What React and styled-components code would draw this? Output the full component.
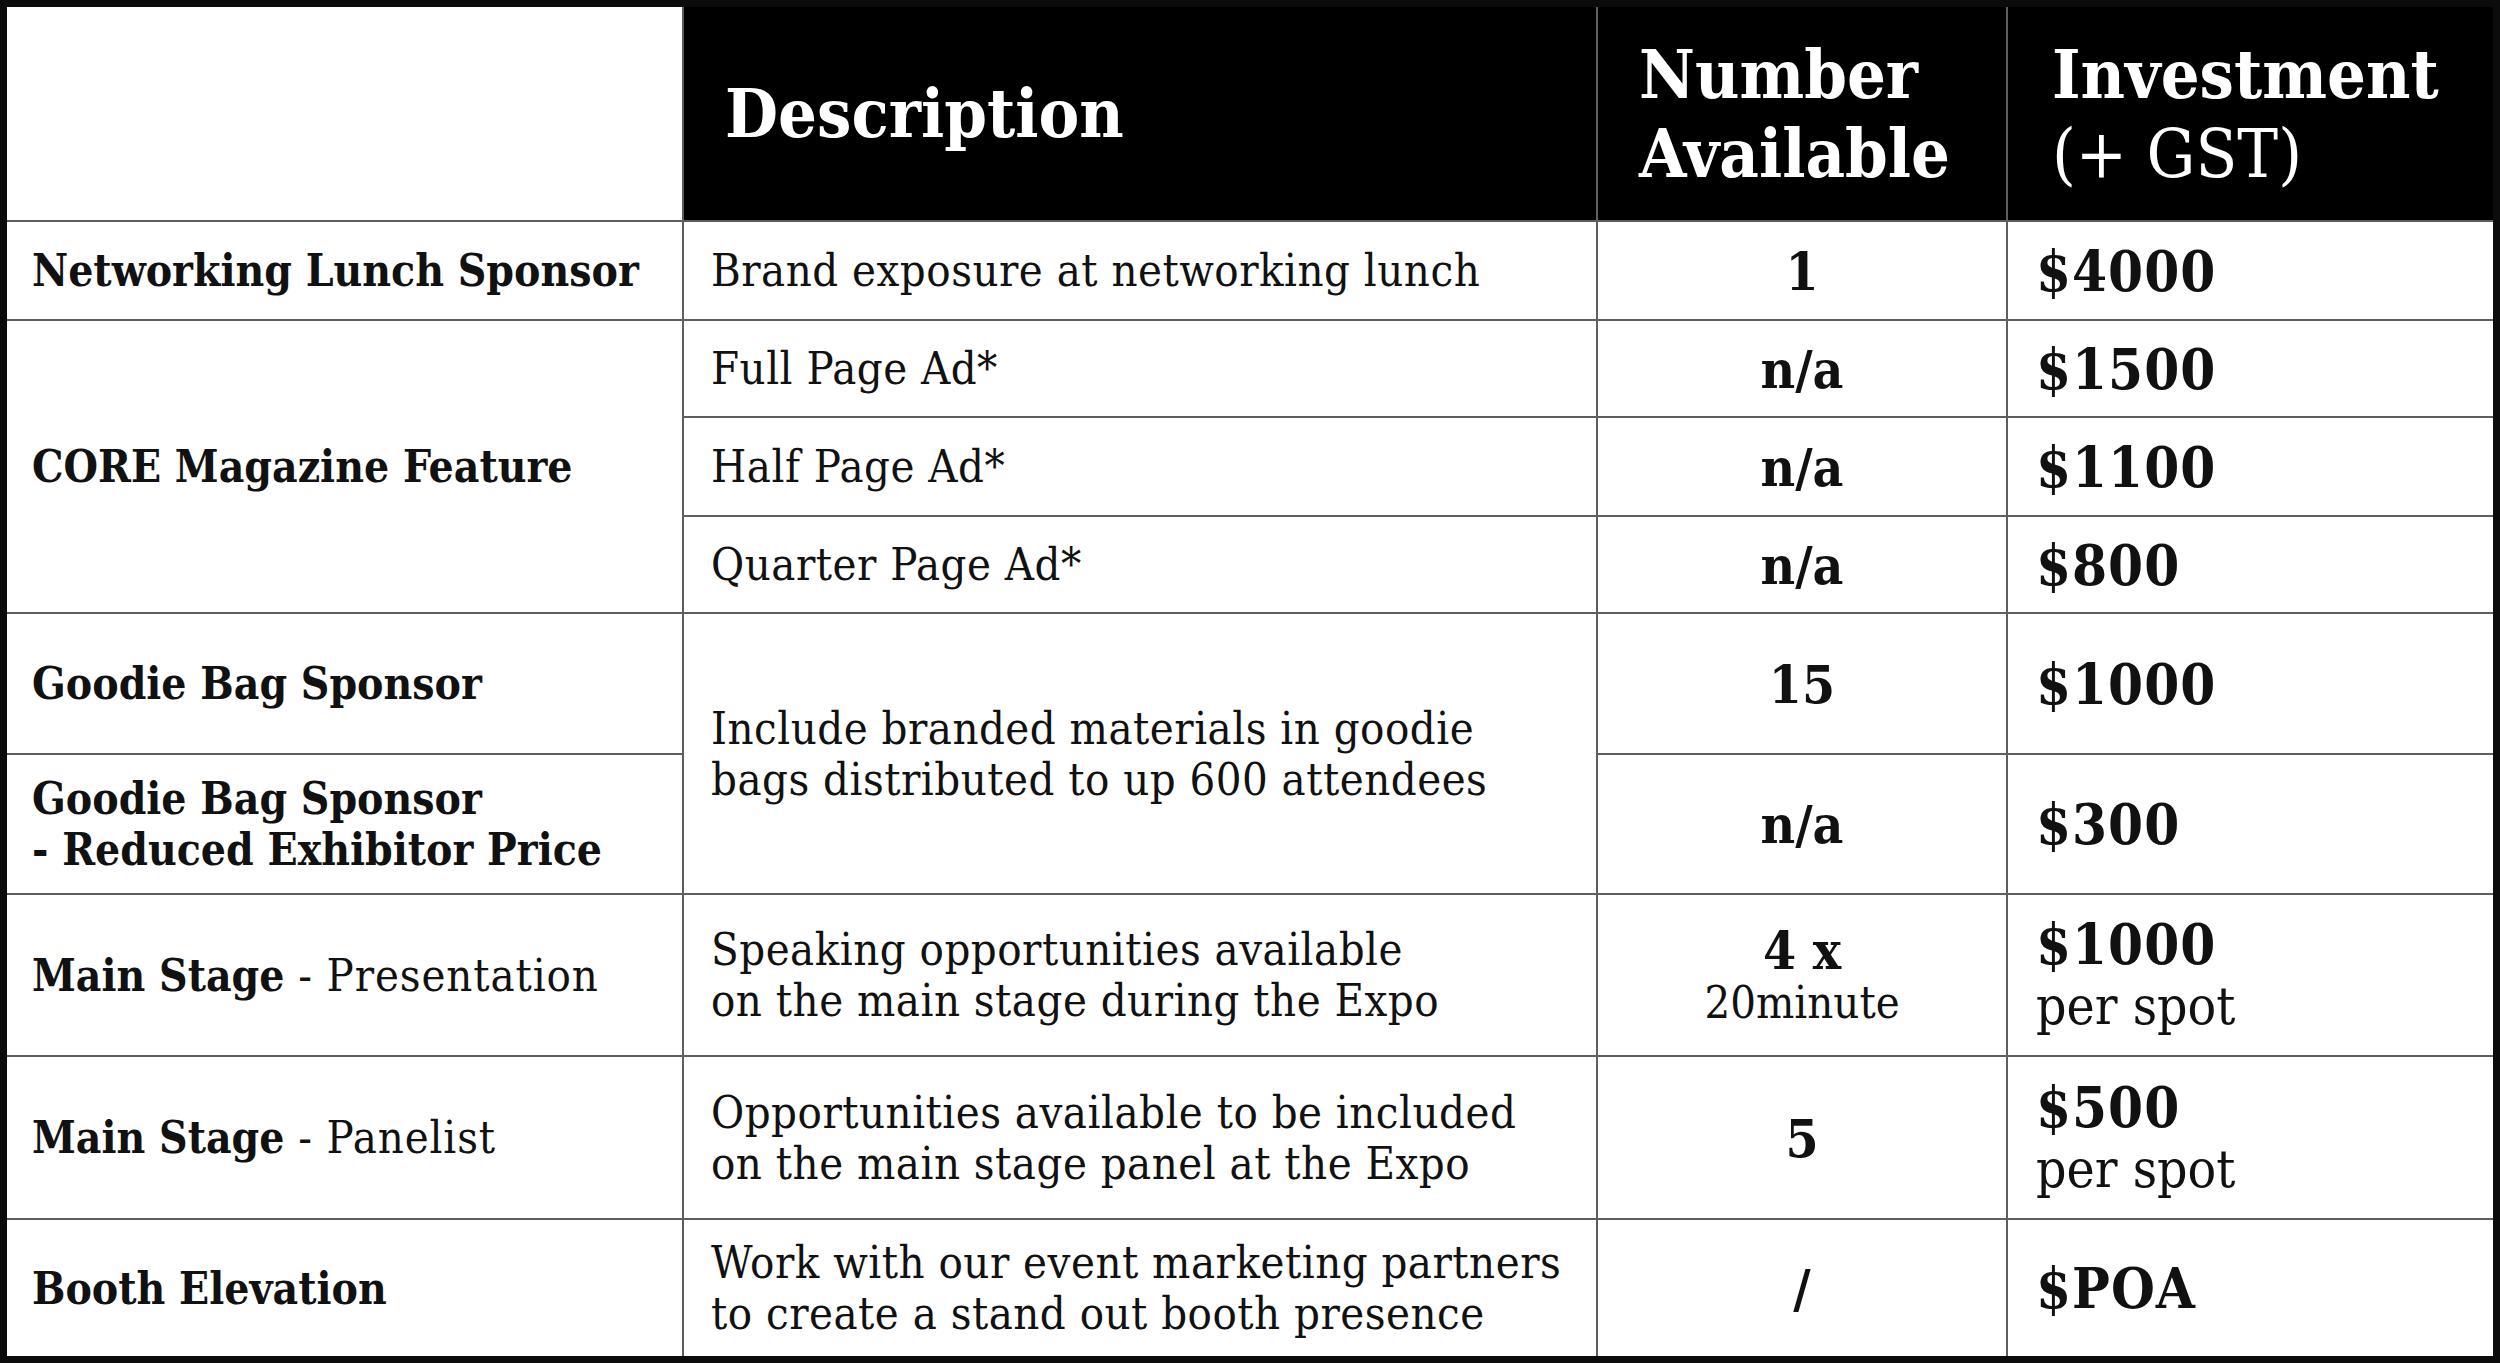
import React from "react";
import styled, { createGlobalStyle } from "styled-components";

const GlobalStyle = createGlobalStyle`
  html, body {
    margin: 0;
    padding: 0;
    background: #ffffff;
  }
  body {
    font-family: "DejaVu Serif Condensed", "DejaVu Serif", serif;
    font-stretch: condensed;
    color: #111;
  }
`;

const rows = [
  { name: <b>Networking Lunch Sponsor</b>, desc: "Brand exposure at networking lunch", num: "1", price: "$4000" },
  { name: <b>CORE Magazine Feature</b>, nameSpan: 3, desc: "Full Page Ad*", num: "n/a", price: "$1500" },
  { desc: "Half Page Ad*", num: "n/a", price: "$1100" },
  { desc: "Quarter Page Ad*", num: "n/a", price: "$800" },
  {
    name: <b>Goodie Bag Sponsor</b>,
    desc: (
      <>
        Include branded materials in goodie
        <br />
        bags distributed to up 600 attendees
      </>
    ),
    descSpan: 2,
    num: "15",
    price: "$1000",
  },
  {
    name: (
      <b>
        Goodie Bag Sponsor
        <br />- Reduced Exhibitor Price
      </b>
    ),
    num: "n/a",
    price: "$300",
  },
  {
    name: (
      <>
        <b>Main Stage</b> - Presentation
      </>
    ),
    desc: (
      <>
        Speaking opportunities available
        <br />
        on the main stage during the Expo
      </>
    ),
    num: "4 x",
    sub: "20minute",
    price: "$1000",
    per: true,
  },
  {
    name: (
      <>
        <b>Main Stage</b> - Panelist
      </>
    ),
    desc: (
      <>
        Opportunities available to be included
        <br />
        on the main stage panel at the Expo
      </>
    ),
    num: "5",
    price: "$500",
    per: true,
  },
  {
    name: <b>Booth Elevation</b>,
    desc: (
      <>
        Work with our event marketing partners
        <br />
        to create a stand out booth presence
      </>
    ),
    num: "/",
    price: "$POA",
  },
];

function App() {
  return (
    <>
      <GlobalStyle />
      <Table>
        <Blank />
        <HeadCell $pad={41}>
          <div>Description</div>
        </HeadCell>
        <HeadCell $pad={41}>
          <div>
            Number
            <br />
            Available
          </div>
        </HeadCell>
        <HeadCell $pad={44}>
          <div>
            Investment
            <br />
            <Light>(+ GST)</Light>
          </div>
        </HeadCell>

        {rows.map((r, i) => (
          <React.Fragment key={i}>
            {r.name && (
              <NameCell $span={r.nameSpan}>
                <div>{r.name}</div>
              </NameCell>
            )}
            {r.desc && (
              <DescCell $span={r.descSpan}>
                <div>{r.desc}</div>
              </DescCell>
            )}
            <NumCell>
              <Count>{r.num}</Count>
              {r.sub && <Sub>{r.sub}</Sub>}
            </NumCell>
            <PriceCell>
              <Price>{r.price}</Price>
              {r.per && <Per>per spot</Per>}
            </PriceCell>
          </React.Fragment>
        ))}
      </Table>
    </>
  );
}

export default App;

const Table = styled.div`
  box-sizing: border-box;
  width: 2500px;
  height: 1363px;
  border: 7px solid #0c0c0c;
  background: #5e5e5e;
  display: grid;
  grid-template-columns: 675px 912px 408px 485px;
  grid-template-rows: 213px 97px 95px 97px 95px 139px 138px 160px 161px 136px;
  gap: 2px;
`;

const Cell = styled.div`
  background: #ffffff;
  display: flex;
  flex-direction: column;
  justify-content: center;
  grid-row: ${(p) => (p.$span ? `span ${p.$span}` : "auto")};
`;

const Blank = styled(Cell)``;

const HeadCell = styled(Cell)`
  background: #000;
  color: #fff;
  font-size: 68px;
  font-weight: 700;
  line-height: 79px;
  padding-left: ${(p) => p.$pad}px;
`;

const Light = styled.span`
  font-weight: 400;
`;

const NameCell = styled(Cell)`
  padding-left: 25px;
  font-size: 45px;
  letter-spacing: 0.9px;
  line-height: 51px;
  font-weight: 400;
  b {
    font-size: 44px;
    letter-spacing: 0;
    font-weight: 700;
  }
`;

const DescCell = styled(Cell)`
  padding-left: 27px;
  font-size: 45px;
  letter-spacing: 0.5px;
  line-height: 51px;
  font-weight: 400;
`;

const NumCell = styled(Cell)`
  align-items: center;
  text-align: center;
`;

const Count = styled.div`
  font-size: 53px;
  font-weight: 700;
  line-height: 56px;
`;

const Sub = styled.div`
  font-size: 45px;
  line-height: 50px;
`;

const PriceCell = styled(Cell)`
  padding-left: 28px;
`;

const Price = styled.div`
  font-size: 56px;
  letter-spacing: 1px;
  font-weight: 700;
  line-height: 62px;
`;

const Per = styled.div`
  font-size: 53px;
  line-height: 62px;
`;
